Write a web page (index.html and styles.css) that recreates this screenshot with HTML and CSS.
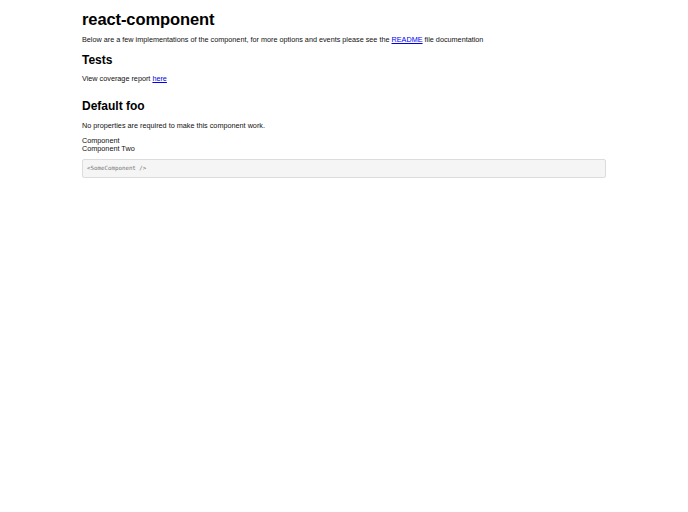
FILE: index.html
```html
<!DOCTYPE html>
<html lang="en">
  <head>
    <meta charset="UTF-8" />
    <meta name="viewport" content="width=device-width, initial-scale=1.0" />
    <title>react-component</title>
    <link rel="stylesheet" href="styles.css">
  </head>
  <body>
    <main class="container">
      <h1 class="page-title">react-component</h1>
      <p class="intro">
        Below are a few implementations of the component, for more options and
        events please see the <a href="#">README</a> file documentation
      </p>

      <!-- tests -->
      <section class="block">
        <h2 class="block-title">Tests</h2>
        <p>View coverage report <a href="#">here</a></p>
      </section>

      <!-- examples -->
      <section class="block example">
        <h2 class="block-title">Default foo</h2>
        <p>No properties are required to make this component work.</p>
        <div class="demo">
          <div>Component</div>
          <div>Component Two</div>
        </div>
        <pre class="code"><code>&lt;SomeComponent /&gt;</code></pre>
      </section>
    </main>
  </body>
</html>
```

FILE: styles.css
```css
/* resets */
* {
  padding: 0;
  margin: 0;
  box-sizing: border-box;
}
body {
  font-family: "Liberation Sans", Arial, sans-serif;
  font-size: 7.25px;
  line-height: 10px;
  color: #111;
  background: #fff;
}

a {
  color: #0000ee;
}

.container {
  max-width: 524px;
  margin: 0 auto;
  padding-top: 9px;
}

.page-title {
  font-size: 16.5px;
  line-height: 20px;
  font-weight: 700;
  letter-spacing: -0.1px;
  color: #000;
}

.intro {
  margin-top: 6px;
}

.block-title {
  font-size: 12px;
  line-height: 14px;
  font-weight: 700;
  margin-bottom: 7px;
  color: #000;
}

.block {
  margin-top: 8px;
}

.example {
  margin-top: 15px;
}

.example .block-title {
  margin-bottom: 8px;
}

.demo {
  margin-top: 6px;
  line-height: 8px;
}

.code {
  margin-top: 6px;
  background: #f5f5f5;
  border: 1px solid #dcdcdc;
  border-radius: 2px;
  padding: 5px 4px;
  font-family: "Liberation Mono", "DejaVu Sans Mono", monospace;
  font-size: 5.8px;
  line-height: 6px;
  color: #777;
}
```
